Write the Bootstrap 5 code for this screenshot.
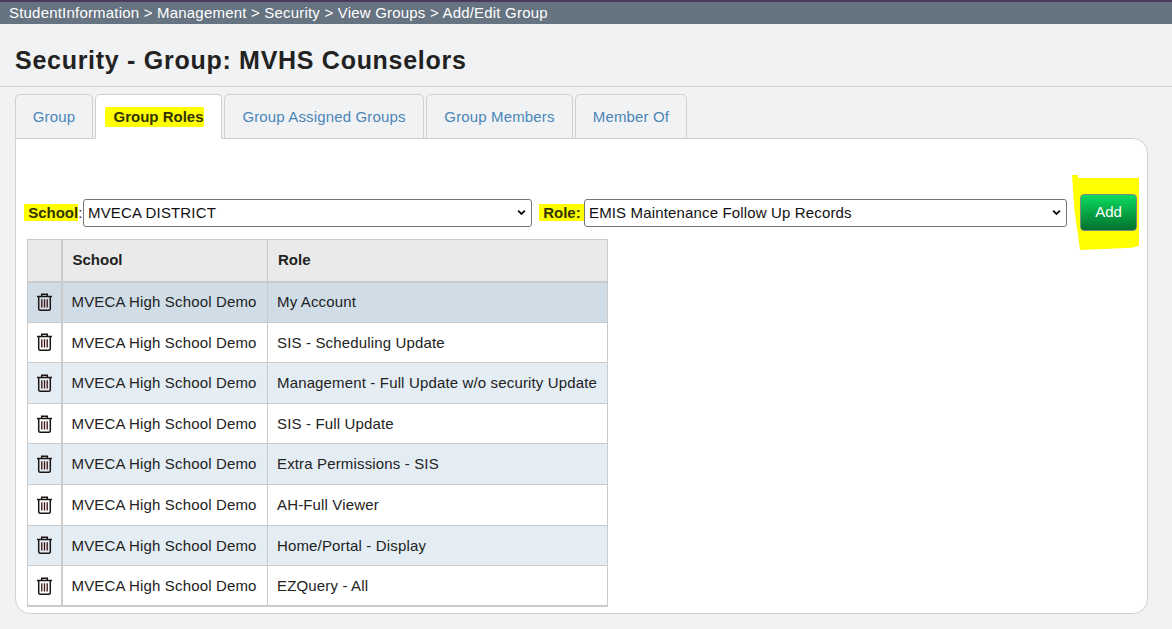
<!DOCTYPE html>
<html lang="en">
<head>
  <meta charset="UTF-8" />
  <meta name="viewport" content="width=device-width, initial-scale=1.0" />
  <title>Security - Group: MVHS Counselors</title>
  <link href="https://cdn.jsdelivr.net/npm/bootstrap@5.3.0/dist/css/bootstrap.min.css" rel="stylesheet" />
  <style>
    body { background: #f1f2f4; font-family: "Liberation Sans", Arial, sans-serif; color: #222; font-size: 15px; letter-spacing: .15px; height: 629px; overflow: hidden; }
    .crumb-bar { background: #667380; color: #fff; border-top: 2px solid #4a3a5c; height: 24px; line-height: 21px; padding-left: 9px; letter-spacing: .2px; }
    .page-head { height: 63px; border-bottom: 1px solid #d0d0d0; padding: 21px 0 0 15px; }
    .page-head h1 { font-size: 25px; font-weight: 700; line-height: 30px; margin: 0; letter-spacing: .72px; color: #222; }
    .tab-strip { margin: 7px 0 0 15px; gap: 2px; position: relative; z-index: 1; }
    .tab-strip .tab-item { height: 45px; line-height: 44px; text-align: center; background: #f1f2f4; border: 1px solid #d0d0d0; border-radius: 5px 5px 0 0; color: #4a86b8; text-decoration: none; margin-bottom: -1px; }
    .tab-strip .tab-item.on { background: #fff; border-bottom-color: #fff; color: #333300; font-weight: 700; letter-spacing: 0; }
    .tab-group { width: 78px; } .tab-roles { width: 127px; } .tab-assigned { width: 200px; } .tab-members { width: 147px; } .tab-memberof { width: 112px; }
    .hl { background: #ff0; color: #333300; }
    .tab-item .hl { padding: 1px 0 2px 8px; margin-left: -8px; border-radius: 2px; }
    .panel-box { margin-left: 15px; width: 1133px; height: 476px; background: #fff; border: 1px solid #d0d0d0; border-radius: 0 15px 15px 15px; padding: 55px 0 0 10px; }
    .filter-row { height: 37px; }
    .filter-row label { font-weight: 700; margin: 0; white-space: nowrap; line-height: 24px; flex: none; letter-spacing: 0; }
    .filter-row .colon { font-weight: 400; }
    .filter-row .role-hl { padding-right: 3px; }
    .sel-box { flex: none; height: 28px; border: 1px solid #767676; border-radius: 3px; padding: 0 22px 0 4px; font-size: 15px; letter-spacing: .15px; line-height: 26px; color: #111; box-shadow: none;
      background-image: url("data:image/svg+xml,%3csvg xmlns='http://www.w3.org/2000/svg' viewBox='0 0 12 8'%3e%3cpath fill='none' stroke='%23111' stroke-width='2.4' d='M1.5 1.5 6 6l4.5-4.5'/%3e%3c/svg%3e");
      background-position: right 5px center; background-size: 9px 7px; }
    .school-lab { width: 59px; margin-left: -2px !important; }
    .sel-school { width: 449px; }
    .role-lab { width: 45px; margin-left: 7px !important; }
    .sel-role { width: 483px; }
    .add-wrap { flex: none; background: #ff0; padding: 19px 2px 19px 8px; margin: -19px 0 -19px 5px; clip-path: polygon(0 0, 9% 0, 9% 4%, 100% 4%, 100% 94%, 90% 97%, 12% 100%, 9% 80%, 4% 50%); }
    .add-btn { display: block; width: 57px; height: 37px; padding: 0; font-size: 15px; letter-spacing: 0; color: #fff; border: 1px solid #7d8a80; border-radius: 4px; background: linear-gradient(#0bdc5e, #02702e); }
    .role-table { width: 581px; margin: 8px 0 0 1px; border-collapse: collapse; table-layout: fixed; }
    .role-table th, .role-table td { border: 1px solid #cbcbcb; padding: 1px 9px 0; white-space: nowrap; vertical-align: middle; color: #222; background: transparent; box-shadow: none; }
    .role-table thead th { background: #eaeaea; height: 42px; padding-top: 0; padding-left: 10px; font-weight: 700; letter-spacing: 0; border-bottom-width: 2px; }
    .role-table tbody td { height: 40.6px; }
    .role-table tbody tr.tint { background: #e4edf4; }
    .role-table tbody tr.picked { background: #d0dde7; }
    .role-table tbody tr:last-child td { border-bottom-width: 2px; }
    .role-table .ico-cell { width: 34px; padding: 0; text-align: center; border-right-width: 2px; }
    .role-table .col-school { width: 206px; }
    .trash-ico { display: block; margin: 0 auto; }
  </style>
</head>
<body>
  <div class="crumb-bar">StudentInformation &gt; Management &gt; Security &gt; View Groups &gt; Add/Edit Group</div>
  <div class="page-head"><h1>Security - Group: MVHS Counselors</h1></div>

  <div class="tab-strip d-flex">
    <a class="tab-item tab-group" href="#">Group</a>
    <a class="tab-item tab-roles on" href="#"><span class="hl">Group Roles</span></a>
    <a class="tab-item tab-assigned" href="#">Group Assigned Groups</a>
    <a class="tab-item tab-members" href="#">Group Members</a>
    <a class="tab-item tab-memberof" href="#">Member Of</a>
  </div>

  <div class="panel-box">
    <div class="filter-row d-flex align-items-center">
      <label class="school-lab"><span class="hl">&nbsp;School</span><span class="colon">:</span></label>
      <select class="form-select sel-box sel-school"><option>MVECA DISTRICT</option></select>
      <label class="role-lab"><span class="hl role-hl">&nbsp;Role:</span></label>
      <select class="form-select sel-box sel-role"><option>EMIS Maintenance Follow Up Records</option></select>
      <div class="add-wrap"><button type="button" class="btn add-btn">Add</button></div>
    </div>

    <table class="role-table">
      <thead>
        <tr><th class="ico-cell"></th><th class="col-school">School</th><th>Role</th></tr>
      </thead>
      <tbody id="roleRows"></tbody>
    </table>
  </div>

  <script>
    const roles = [
      "My Account",
      "SIS - Scheduling Update",
      "Management - Full Update w/o security Update",
      "SIS - Full Update",
      "Extra Permissions - SIS",
      "AH-Full Viewer",
      "Home/Portal - Display",
      "EZQuery - All"
    ];
    const trash = `<svg class="trash-ico" width="17" height="18" viewBox="0 0 16 18" fill="none" stroke="#1d1414" stroke-width="1.5">
      <path d="M0.5 3.5h15M5.2 3.5V1.2h5.6v2.3M2.2 3.5v12.2c0 .9.6 1.5 1.5 1.5h8.6c.9 0 1.5-.6 1.5-1.5V3.5"/>
      <path d="M5.3 6.2v8.2M8 6.2v8.2M10.7 6.2v8.2" stroke="#3a1010" stroke-width="1.3"/></svg>`;
    document.getElementById("roleRows").innerHTML = roles.map((r, i) => {
      const cls = i === 0 ? "picked" : (i % 2 === 0 ? "tint" : "");
      return `<tr class="${cls}"><td class="ico-cell">${trash}</td><td>MVECA High School Demo</td><td>${r}</td></tr>`;
    }).join("");
  </script>
  <script src="https://cdn.jsdelivr.net/npm/bootstrap@5.3.0/dist/js/bootstrap.bundle.min.js"></script>
</body>
</html>
